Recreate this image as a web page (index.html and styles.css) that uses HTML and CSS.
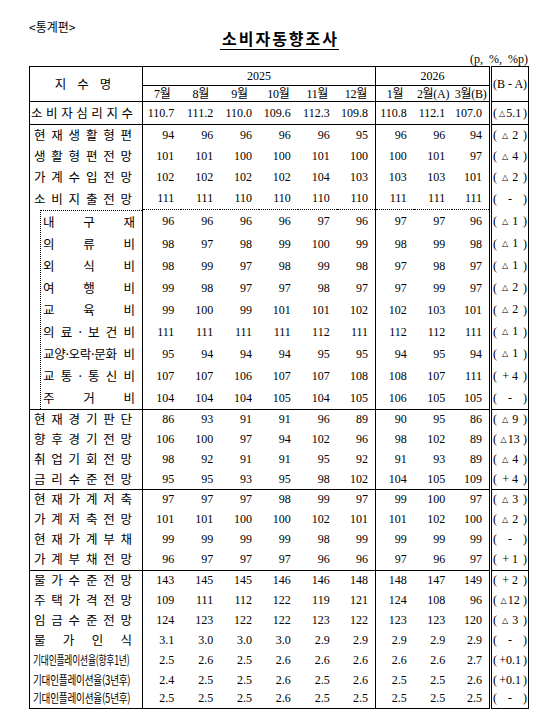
FILE: index.html
```html
<!DOCTYPE html>
<html lang="ko">
<head>
<meta charset="utf-8">
<title>소비자동향조사</title>
<link rel="stylesheet" href="styles.css">
</head>
<body>
<div class="page">
  <div class="section">&lt;통계편&gt;</div>
  <div class="title-wrap"><h1 class="title">소비자동향조사</h1></div>
  <div class="unit">(p,  %,  %p)</div>
  <table class="stat">
    <colgroup>
      <col class="c-lbl"><col class="c-m" span="6"><col class="c-m2" span="3"><col class="c-ba">
    </colgroup>
    <thead>
      <tr class="h1">
        <th class="lbl hd" rowspan="2"><div class="hd-in"><span>지</span><span>수</span><span>명</span></div></th>
        <th class="yr" colspan="6">2025</th>
        <th class="yr c26" colspan="3">2026</th>
        <th class="ba" rowspan="2"><div class="ba-in"><span>(</span><span>B - A</span><span>)</span></div></th>
      </tr>
      <tr class="h2">
        <th>7월</th><th>8월</th><th>9월</th><th>10월</th><th>11월</th><th>12월</th>
        <th class="c26">1월</th><th>2월(A)</th><th>3월(B)</th>
      </tr>
    </thead>
    <tbody>
      <tr class="r0 top">
        <td class="lbl l7">소 비 자 심 리 지 수</td>
        <td class="n">110.7</td><td class="n">111.2</td><td class="n">110.0</td><td class="n">109.6</td><td class="n">112.3</td><td class="n">109.8</td>
        <td class="n c26">110.8</td><td class="n">112.1</td><td class="n">107.0</td>
        <td class="ba"><div class="ba-in"><span>(</span><span><i class="tri">△</i>5.1</span><span>)</span></div></td>
      </tr>
      <tr class="r21 top">
        <td class="lbl">현 재 생 활 형 편</td>
        <td class="n">94</td><td class="n">96</td><td class="n">96</td><td class="n">96</td><td class="n">96</td><td class="n">95</td>
        <td class="n c26">96</td><td class="n">96</td><td class="n">94</td>
        <td class="ba"><div class="ba-in"><span>(</span><span><i class="tri">△</i> 2</span><span>)</span></div></td>
      </tr>
      <tr class="r21">
        <td class="lbl">생 활 형 편 전 망</td>
        <td class="n">101</td><td class="n">101</td><td class="n">100</td><td class="n">100</td><td class="n">101</td><td class="n">100</td>
        <td class="n c26">100</td><td class="n">101</td><td class="n">97</td>
        <td class="ba"><div class="ba-in"><span>(</span><span><i class="tri">△</i> 4</span><span>)</span></div></td>
      </tr>
      <tr class="r21">
        <td class="lbl">가 계 수 입 전 망</td>
        <td class="n">102</td><td class="n">102</td><td class="n">102</td><td class="n">102</td><td class="n">104</td><td class="n">103</td>
        <td class="n c26">103</td><td class="n">103</td><td class="n">101</td>
        <td class="ba"><div class="ba-in"><span>(</span><span><i class="tri">△</i> 2</span><span>)</span></div></td>
      </tr>
      <tr class="r22">
        <td class="lbl">소 비 지 출 전 망</td>
        <td class="n">111</td><td class="n">111</td><td class="n">110</td><td class="n">110</td><td class="n">110</td><td class="n">110</td>
        <td class="n c26">111</td><td class="n">111</td><td class="n">111</td>
        <td class="ba"><div class="ba-in"><span>(</span><span>-</span><span>)</span></div></td>
      </tr>
      <tr class="r23 subtop">
        <td class="lbl sub" rowspan="9">
          <div class="sub-in">
            <div class="sl first">내 구 재</div>
            <div class="sl">의 류 비</div>
            <div class="sl">외 식 비</div>
            <div class="sl">여 행 비</div>
            <div class="sl">교 육 비</div>
            <div class="sl">의 료 · 보 건 비</div>
            <div class="sl"><span class="sq">교양·오락·문화</span> 비</div>
            <div class="sl">교 통 · 통 신 비</div>
            <div class="sl">주 거 비</div>
          </div>
        </td>
        <td class="n">96</td><td class="n">96</td><td class="n">96</td><td class="n">96</td><td class="n">97</td><td class="n">96</td>
        <td class="n c26">97</td><td class="n">97</td><td class="n">96</td>
        <td class="ba"><div class="ba-in"><span>(</span><span><i class="tri">△</i> 1</span><span>)</span></div></td>
      </tr>
      <tr class="r22">
        <td class="n">98</td><td class="n">97</td><td class="n">98</td><td class="n">99</td><td class="n">100</td><td class="n">99</td>
        <td class="n c26">98</td><td class="n">99</td><td class="n">98</td>
        <td class="ba"><div class="ba-in"><span>(</span><span><i class="tri">△</i> 1</span><span>)</span></div></td>
      </tr>
      <tr class="r22">
        <td class="n">98</td><td class="n">99</td><td class="n">97</td><td class="n">98</td><td class="n">99</td><td class="n">98</td>
        <td class="n c26">97</td><td class="n">98</td><td class="n">97</td>
        <td class="ba"><div class="ba-in"><span>(</span><span><i class="tri">△</i> 1</span><span>)</span></div></td>
      </tr>
      <tr class="r22">
        <td class="n">99</td><td class="n">98</td><td class="n">97</td><td class="n">97</td><td class="n">98</td><td class="n">97</td>
        <td class="n c26">97</td><td class="n">99</td><td class="n">97</td>
        <td class="ba"><div class="ba-in"><span>(</span><span><i class="tri">△</i> 2</span><span>)</span></div></td>
      </tr>
      <tr class="r22">
        <td class="n">99</td><td class="n">100</td><td class="n">99</td><td class="n">101</td><td class="n">101</td><td class="n">102</td>
        <td class="n c26">102</td><td class="n">103</td><td class="n">101</td>
        <td class="ba"><div class="ba-in"><span>(</span><span><i class="tri">△</i> 2</span><span>)</span></div></td>
      </tr>
      <tr class="r22">
        <td class="n">111</td><td class="n">111</td><td class="n">111</td><td class="n">111</td><td class="n">112</td><td class="n">111</td>
        <td class="n c26">112</td><td class="n">112</td><td class="n">111</td>
        <td class="ba"><div class="ba-in"><span>(</span><span><i class="tri">△</i> 1</span><span>)</span></div></td>
      </tr>
      <tr class="r22">
        <td class="n">95</td><td class="n">94</td><td class="n">94</td><td class="n">94</td><td class="n">95</td><td class="n">95</td>
        <td class="n c26">94</td><td class="n">95</td><td class="n">94</td>
        <td class="ba"><div class="ba-in"><span>(</span><span><i class="tri">△</i> 1</span><span>)</span></div></td>
      </tr>
      <tr class="r22">
        <td class="n">107</td><td class="n">107</td><td class="n">106</td><td class="n">107</td><td class="n">107</td><td class="n">108</td>
        <td class="n c26">108</td><td class="n">107</td><td class="n">111</td>
        <td class="ba"><div class="ba-in"><span>(</span><span>+ 4</span><span>)</span></div></td>
      </tr>
      <tr class="r22">
        <td class="n">104</td><td class="n">104</td><td class="n">104</td><td class="n">105</td><td class="n">104</td><td class="n">105</td>
        <td class="n c26">106</td><td class="n">105</td><td class="n">105</td>
        <td class="ba"><div class="ba-in"><span>(</span><span>-</span><span>)</span></div></td>
      </tr>
      <tr class="r20 top">
        <td class="lbl">현 재 경 기 판 단</td>
        <td class="n">86</td><td class="n">93</td><td class="n">91</td><td class="n">91</td><td class="n">96</td><td class="n">89</td>
        <td class="n c26">90</td><td class="n">95</td><td class="n">86</td>
        <td class="ba"><div class="ba-in"><span>(</span><span><i class="tri">△</i> 9</span><span>)</span></div></td>
      </tr>
      <tr class="r20">
        <td class="lbl">향 후 경 기 전 망</td>
        <td class="n">106</td><td class="n">100</td><td class="n">97</td><td class="n">94</td><td class="n">102</td><td class="n">96</td>
        <td class="n c26">98</td><td class="n">102</td><td class="n">89</td>
        <td class="ba"><div class="ba-in"><span>(</span><span><i class="tri">△</i>13</span><span>)</span></div></td>
      </tr>
      <tr class="r20">
        <td class="lbl">취 업 기 회 전 망</td>
        <td class="n">98</td><td class="n">92</td><td class="n">91</td><td class="n">91</td><td class="n">95</td><td class="n">92</td>
        <td class="n c26">91</td><td class="n">93</td><td class="n">89</td>
        <td class="ba"><div class="ba-in"><span>(</span><span><i class="tri">△</i> 4</span><span>)</span></div></td>
      </tr>
      <tr class="r20">
        <td class="lbl">금 리 수 준 전 망</td>
        <td class="n">95</td><td class="n">95</td><td class="n">93</td><td class="n">95</td><td class="n">98</td><td class="n">102</td>
        <td class="n c26">104</td><td class="n">105</td><td class="n">109</td>
        <td class="ba"><div class="ba-in"><span>(</span><span>+ 4</span><span>)</span></div></td>
      </tr>
      <tr class="r20 top">
        <td class="lbl">현 재 가 계 저 축</td>
        <td class="n">97</td><td class="n">97</td><td class="n">97</td><td class="n">98</td><td class="n">99</td><td class="n">97</td>
        <td class="n c26">99</td><td class="n">100</td><td class="n">97</td>
        <td class="ba"><div class="ba-in"><span>(</span><span><i class="tri">△</i> 3</span><span>)</span></div></td>
      </tr>
      <tr class="r20">
        <td class="lbl">가 계 저 축 전 망</td>
        <td class="n">101</td><td class="n">101</td><td class="n">100</td><td class="n">100</td><td class="n">102</td><td class="n">101</td>
        <td class="n c26">101</td><td class="n">102</td><td class="n">100</td>
        <td class="ba"><div class="ba-in"><span>(</span><span><i class="tri">△</i> 2</span><span>)</span></div></td>
      </tr>
      <tr class="r20">
        <td class="lbl">현 재 가 계 부 채</td>
        <td class="n">99</td><td class="n">99</td><td class="n">99</td><td class="n">99</td><td class="n">98</td><td class="n">99</td>
        <td class="n c26">99</td><td class="n">99</td><td class="n">99</td>
        <td class="ba"><div class="ba-in"><span>(</span><span>-</span><span>)</span></div></td>
      </tr>
      <tr class="r21">
        <td class="lbl">가 계 부 채 전 망</td>
        <td class="n">96</td><td class="n">97</td><td class="n">97</td><td class="n">97</td><td class="n">96</td><td class="n">96</td>
        <td class="n c26">97</td><td class="n">96</td><td class="n">97</td>
        <td class="ba"><div class="ba-in"><span>(</span><span>+ 1</span><span>)</span></div></td>
      </tr>
      <tr class="r20 top">
        <td class="lbl">물 가 수 준 전 망</td>
        <td class="n">143</td><td class="n">145</td><td class="n">145</td><td class="n">146</td><td class="n">146</td><td class="n">148</td>
        <td class="n c26">148</td><td class="n">147</td><td class="n">149</td>
        <td class="ba"><div class="ba-in"><span>(</span><span>+ 2</span><span>)</span></div></td>
      </tr>
      <tr class="r20">
        <td class="lbl">주 택 가 격 전 망</td>
        <td class="n">109</td><td class="n">111</td><td class="n">112</td><td class="n">122</td><td class="n">119</td><td class="n">121</td>
        <td class="n c26">124</td><td class="n">108</td><td class="n">96</td>
        <td class="ba"><div class="ba-in"><span>(</span><span><i class="tri">△</i>12</span><span>)</span></div></td>
      </tr>
      <tr class="r20">
        <td class="lbl">임 금 수 준 전 망</td>
        <td class="n">124</td><td class="n">123</td><td class="n">122</td><td class="n">122</td><td class="n">123</td><td class="n">122</td>
        <td class="n c26">123</td><td class="n">123</td><td class="n">120</td>
        <td class="ba"><div class="ba-in"><span>(</span><span><i class="tri">△</i> 3</span><span>)</span></div></td>
      </tr>
      <tr class="r20">
        <td class="lbl">물 가 인 식</td>
        <td class="n">3.1</td><td class="n">3.0</td><td class="n">3.0</td><td class="n">3.0</td><td class="n">2.9</td><td class="n">2.9</td>
        <td class="n c26">2.9</td><td class="n">2.9</td><td class="n">2.9</td>
        <td class="ba"><div class="ba-in"><span>(</span><span>-</span><span>)</span></div></td>
      </tr>
      <tr class="r20">
        <td class="lbl sqz"><span class="squeeze s1">기대인플레이션율(향후1년)</span></td>
        <td class="n">2.5</td><td class="n">2.6</td><td class="n">2.5</td><td class="n">2.6</td><td class="n">2.6</td><td class="n">2.6</td>
        <td class="n c26">2.6</td><td class="n">2.6</td><td class="n">2.7</td>
        <td class="ba"><div class="ba-in"><span>(</span><span>+0.1</span><span>)</span></div></td>
      </tr>
      <tr class="r19">
        <td class="lbl sqz"><span class="squeeze s2">기대인플레이션율(3년후)</span></td>
        <td class="n">2.4</td><td class="n">2.5</td><td class="n">2.5</td><td class="n">2.6</td><td class="n">2.5</td><td class="n">2.6</td>
        <td class="n c26">2.5</td><td class="n">2.5</td><td class="n">2.6</td>
        <td class="ba"><div class="ba-in"><span>(</span><span>+0.1</span><span>)</span></div></td>
      </tr>
      <tr class="r19">
        <td class="lbl sqz"><span class="squeeze s2">기대인플레이션율(5년후)</span></td>
        <td class="n">2.5</td><td class="n">2.5</td><td class="n">2.5</td><td class="n">2.6</td><td class="n">2.5</td><td class="n">2.5</td>
        <td class="n c26">2.5</td><td class="n">2.5</td><td class="n">2.5</td>
        <td class="ba"><div class="ba-in"><span>(</span><span>-</span><span>)</span></div></td>
      </tr>
    </tbody>
  </table>
</div>
</body>
</html>
```

FILE: styles.css
```css
* { box-sizing: border-box; }
html, body { margin: 0; padding: 0; background: #fff; }
body {
  font-family: "Liberation Serif", "Noto Sans CJK KR", serif;
  color: #000;
}
.page {
  width: 530px;
  padding: 21px 0 0 29px;
}
.section {
  font-family: "Noto Sans CJK KR", sans-serif;
  font-size: 12px;
  line-height: 11px;
  height: 11px;
}
.title-wrap {
  display: flex;
  justify-content: center;
}
.title {
  margin: 0;
  font-family: "Noto Sans CJK KR", sans-serif;
  font-size: 16px;
  font-weight: 700;
  letter-spacing: 2px;
  line-height: 12px;
  padding: 0 0 5px 2px;
  border-bottom: 1.5px solid #000;
}
.unit {
  text-align: right;
  font-size: 12px;
  line-height: 12px;
  margin-top: 3px;
  padding-right: 2px;
  white-space: pre;
}

/* table */
.stat {
  border-collapse: collapse;
  table-layout: fixed;
  width: 500px;
  margin-top: 1px;
  border: 1px solid #000;
  font-size: 12px;
}
.c-lbl { width: 113px; }
.c-m { width: 38.83px; }
.c-m2 { width: 38.33px; }
.c-ba { width: 38px; }

.stat th, .stat td {
  padding: 0;
  font-weight: normal;
  white-space: nowrap;
  vertical-align: middle;
  line-height: 14px;
}
.stat th { text-align: center; }
.h1 { height: 19px; }
.h2 { height: 16px; }
.h2 th { letter-spacing: -0.3px; border-bottom: 1px solid #000; }
.yr { border-bottom: 1px solid #000; }
.hd { border-bottom: 1px solid #000; }
.hd-in {
  display: flex;
  justify-content: center;
  gap: 11px;
  font-family: "Noto Sans CJK KR", sans-serif;
}

.r0 { height: 23px; }
.r19 { height: 19px; }
.r20 { height: 20px; }
.r21 { height: 21px; }
.r22 { height: 22px; }
.r23 { height: 23px; }

.top td { border-top: 1px solid #000; }
.subtop td.n { border-top: 1px dotted #000; }

.lbl {
  border-right: 1px solid #000;
  font-family: "Noto Sans CJK KR", sans-serif;
  font-size: 12.5px;
  text-align: justify;
  text-align-last: justify;
  padding: 0 10px 0 4px !important;
}
.lbl.l7 { padding-left: 1px !important; padding-right: 9px !important; }
.lbl.sqz { text-align: left; text-align-last: left; padding-left: 3px !important; }

.lbl.sub {
  vertical-align: top;
  padding: 0 0 0 10px !important;
}
.sub-in {
  height: 199px;
  border-left: 1px dotted #000;
  border-top: 1px dotted #000;
}
.sl {
  height: 22px;
  line-height: 22px;
  padding: 0 7px 0 2px;
  text-align: justify;
  text-align-last: justify;
}
.sq {
  font-size: 12.5px;
  letter-spacing: -0.3px;
}
.squeeze {
  display: inline-block;
  transform-origin: left center;
  letter-spacing: -0.3px;
}
.s1 { transform: scaleX(0.7); }
.s2 { transform: scaleX(0.77); }

.n {
  text-align: right;
  padding-right: 7px !important;
}
.c26 { border-left: 1px solid #000; }
.ba { border-left: 3px double #000; }
.ba-in {
  display: flex;
  justify-content: space-between;
  align-items: center;
  padding: 0 1px;
}
.tri {
  font-style: normal;
  font-family: "DejaVu Sans", sans-serif;
  font-size: 8px;
  vertical-align: 1px;
  margin-right: 1px;
}
```
